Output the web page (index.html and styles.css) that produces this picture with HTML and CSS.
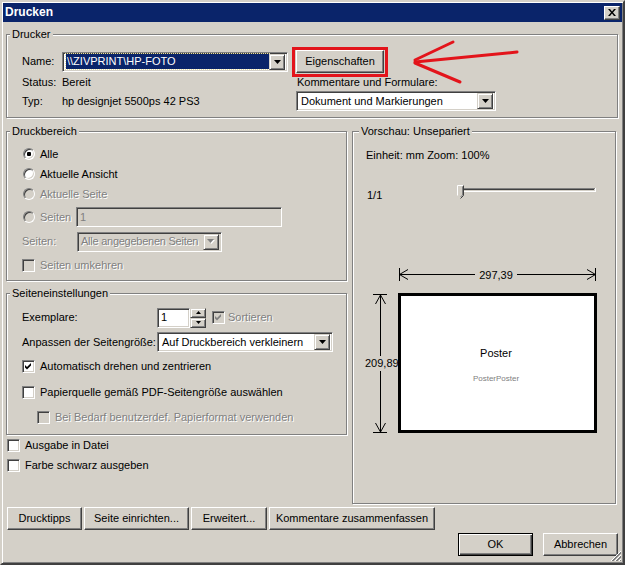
FILE: index.html
```html
<!DOCTYPE html>
<html lang="de">
<head>
<meta charset="utf-8">
<title>Drucken</title>
<link rel="stylesheet" href="styles.css">
</head>
<body>
<div class="dialog">
  <div class="titlebar">
    <span class="title">Drucken</span>
    <span class="close"><svg width="8" height="7" viewBox="0 0 8 7"><path d="M0 0h2l2 2.4L6 0h2L5 3.5 8 7H6L4 4.6 2 7H0l3-3.5z"/></svg></span>
  </div>
  <div class="content">
    <div class="group printer">
      <span class="group-title">Drucker</span>
      <div class="printer-grid">
        <span>Name:</span>
        <div class="field combo name-combo"><span class="sel-text">\\ZIVPRINT\HP-FOTO</span><span class="drop"><svg width="7" height="4" viewBox="0 0 7 4"><path d="M0 0h7L3.5 4z"/></svg></span></div>
        <div class="props-wrap"><button class="btn props">Eigenschaften</button></div>
        <span>Status:</span><span>Bereit</span><span class="kf-label">Kommentare und Formulare:</span>
        <span>Typ:</span><span>hp designjet 5500ps 42 PS3</span>
        <div class="field combo kf-combo"><span class="combo-text">Dokument und Markierungen</span><span class="drop"><svg width="7" height="4" viewBox="0 0 7 4"><path d="M0 0h7L3.5 4z"/></svg></span></div>
      </div>
    </div>

    <div class="main">
      <div class="left-col">
        <div class="group range">
          <span class="group-title">Druckbereich</span>
          <div class="row r1"><span class="radio checked"></span><span>Alle</span></div>
          <div class="row"><span class="radio"></span><span>Aktuelle Ansicht</span></div>
          <div class="row"><span class="radio disabled"></span><span class="dis">Aktuelle Seite</span></div>
          <div class="row r4"><span class="radio disabled"></span><span class="dis seiten-lbl">Seiten</span><div class="field disabled pages-input"><span class="dis-plain">1</span></div></div>
          <div class="row r5"><span class="dis pages-lbl">Seiten:</span><div class="field combo disabled pages-combo"><span class="combo-text dis tight">Alle angegebenen Seiten</span><span class="drop"><svg width="8" height="5" viewBox="0 0 8 5"><path d="M1 1h7L4.5 5z" fill="#fff"/><path d="M0 0h7L3.5 4z" fill="#808080"/></svg></span></div></div>
          <div class="row r6"><span class="check disabled"></span><span class="dis">Seiten umkehren</span></div>
        </div>

        <div class="group pagesetup">
          <span class="group-title">Seiteneinstellungen</span>
          <div class="row s1">
            <span class="ps-lbl">Exemplare:</span>
            <div class="field copies"><span>1</span></div>
            <div class="spin">
              <span class="spin-btn"><svg width="5" height="3" viewBox="0 0 5 3"><path d="M2.5 0L5 3H0z"/></svg></span>
              <span class="spin-btn"><svg width="5" height="3" viewBox="0 0 5 3"><path d="M0 0h5L2.5 3z"/></svg></span>
            </div>
            <span class="check disabled sort-check"><svg width="13" height="13" viewBox="0 0 13 13"><path d="M3 5l2 2 4-4v2.5l-4 4-2-2z" fill="#808080"/></svg></span>
            <span class="dis">Sortieren</span>
          </div>
          <div class="row s2">
            <span class="ps-lbl">Anpassen der Seitengröße:</span>
            <div class="field combo fit-combo"><span class="combo-text">Auf Druckbereich verkleinern</span><span class="drop"><svg width="7" height="4" viewBox="0 0 7 4"><path d="M0 0h7L3.5 4z"/></svg></span></div>
          </div>
          <div class="row s3"><span class="check"><svg width="13" height="13" viewBox="0 0 13 13"><path d="M3 5l2 2 4-4v2.5l-4 4-2-2z" fill="#000"/></svg></span><span>Automatisch drehen und zentrieren</span></div>
          <div class="row s4"><span class="check"></span><span>Papierquelle gemäß PDF-Seitengröße auswählen</span></div>
          <div class="row s5"><span class="check disabled"></span><span class="dis">Bei Bedarf benutzerdef. Papierformat verwenden</span></div>
        </div>

        <div class="row o1"><span class="check"></span><span>Ausgabe in Datei</span></div>
        <div class="row o2"><span class="check"></span><span>Farbe schwarz ausgeben</span></div>
      </div>

      <div class="group preview">
        <span class="group-title">Vorschau: Unsepariert</span>
        <div class="unit">Einheit: mm Zoom: 100%</div>
        <div class="slider-row">
          <span>1/1</span>
          <svg class="slider" width="139" height="14" viewBox="0 0 139 14">
            <line x1="5" y1="3.5" x2="138" y2="3.5" stroke="#808080"/>
            <line x1="5" y1="4.5" x2="137" y2="4.5" stroke="#404040"/>
            <line x1="5" y1="6.5" x2="138" y2="6.5" stroke="#fff"/>
            <line x1="138.5" y1="3" x2="138.5" y2="7" stroke="#fff"/>
            <path d="M0 0h7v10l-3.5 3.5L0 10z" fill="#d4d0c8"/>
            <path d="M0.5 10.5V0.5h6" fill="none" stroke="#fff"/>
            <path d="M6.5 0.5v10l-3 3" fill="none" stroke="#404040"/>
            <path d="M5.5 1.5v8.5l-2 2" fill="none" stroke="#808080"/>
          </svg>
        </div>
        <svg class="diagram" width="262" height="200" viewBox="0 0 262 200">
          <g stroke="#000" stroke-width="1" fill="none">
            <line x1="46.5" y1="6" x2="46.5" y2="19"/>
            <line x1="242.5" y1="6" x2="242.5" y2="19"/>
            <line x1="46" y1="12.5" x2="243" y2="12.5"/>
            <path d="M55 7.5l-8.5 5 8.5 5"/>
            <path d="M234 7.5l8.5 5-8.5 5"/>
            <line x1="20" y1="32.5" x2="34" y2="32.5"/>
            <line x1="20" y1="170.5" x2="34" y2="170.5"/>
            <line x1="27.5" y1="33" x2="27.5" y2="170"/>
            <path d="M22.5 42l5-9 5 9"/>
            <path d="M22.5 161l5 9 5-9"/>
          </g>
          <rect x="122" y="4" width="42" height="16" fill="#d4d0c8"/>
          <text x="143" y="16.5" text-anchor="middle" class="dtext">297,39</text>
          <rect x="11" y="94" width="34" height="15" fill="#d4d0c8"/>
          <text x="12" y="105" class="dtext">209,89</text>
          <rect x="46.5" y="32.5" width="196" height="137" fill="#fff" stroke="#000" stroke-width="3"/>
          <text x="143" y="95" text-anchor="middle" class="dtext">Poster</text>
          <text x="143" y="119" text-anchor="middle" class="dsmall">PosterPoster</text>
        </svg>
      </div>
    </div>

    <div class="btn-row">
      <button class="btn b1">Drucktipps</button>
      <button class="btn b2">Seite einrichten...</button>
      <button class="btn b3">Erweitert...</button>
      <button class="btn b4">Kommentare zusammenfassen</button>
    </div>
    <div class="ok-row">
      <button class="btn default">OK</button>
      <button class="btn">Abbrechen</button>
    </div>
  </div>

  <svg class="annot-arrow" width="120" height="52" viewBox="0 0 120 52">
    <g stroke="#e3141b" stroke-width="3" stroke-linecap="round" fill="none">
      <path d="M109 14L7 24"/>
      <path d="M7 22L45 4"/>
      <path d="M7 25L52 44"/>
    </g>
  </svg>
  <svg class="grip" width="12" height="12" viewBox="0 0 12 12">
    <g stroke-width="1">
      <line x1="11" y1="1" x2="1" y2="11" stroke="#fff"/>
      <line x1="11" y1="2" x2="2" y2="11" stroke="#808080"/>
      <line x1="11" y1="3" x2="3" y2="11" stroke="#808080"/>
      <line x1="11" y1="5" x2="5" y2="11" stroke="#fff"/>
      <line x1="11" y1="6" x2="6" y2="11" stroke="#808080"/>
      <line x1="11" y1="7" x2="7" y2="11" stroke="#808080"/>
      <line x1="11" y1="9" x2="9" y2="11" stroke="#fff"/>
      <line x1="11" y1="10" x2="10" y2="11" stroke="#808080"/>
    </g>
  </svg>
</div>
</body>
</html>
```

FILE: styles.css
```css
* { box-sizing: border-box; }
html, body { margin: 0; padding: 0; background: #d4d0c8; }
body {
  font-family: "Liberation Sans", Arial, sans-serif;
  font-size: 11px;
  line-height: 13px;
  color: #000;
}

.dialog {
  position: relative;
  width: 625px;
  height: 565px;
  background: #d4d0c8;
  border: 2px solid;
  border-color: #d4d0c8 #404040 #404040 #d4d0c8;
  box-shadow: inset 1px 1px 0 #fff, inset -1px -1px 0 #808080;
}

.titlebar {
  margin: 1px 1px 0 1px;
  height: 19px;
  background: #0a246a;
  display: flex;
  align-items: center;
  justify-content: space-between;
  padding: 0 2px 0 2px;
}
.title { color: #fff; font-weight: bold; font-size: 12px; }
.close {
  width: 16px; height: 14px;
  background: #d4d0c8;
  border: 1px solid;
  border-color: #fff #404040 #404040 #fff;
  box-shadow: inset -1px -1px 0 #808080;
  display: flex; align-items: center; justify-content: center;
  padding-right: 1px;
}

.content { padding: 0 5px 0 4px; }

/* group boxes */
.group {
  border: 1px solid #808080;
  box-shadow: inset 1px 1px 0 #fff, 1px 1px 0 #fff;
}
.group-title {
  display: block;
  width: fit-content;
  background: #d4d0c8;
  padding: 0 2px;
  margin-top: -7px;
  height: 13px;
  line-height: 13px;
}

.printer { margin-top: 12px; padding: 0 0 6px 15px; }
.printer .group-title { margin-left: -12px; }
.printer-grid {
  margin-top: 9px;
  display: grid;
  grid-template-columns: 40px 234px 1fr;
  grid-template-rows: 23px 18px 20px;
  align-items: center;
}
.kf-label { padding-left: 1px; }

/* fields */
.field {
  background: #fff;
  border: 1px solid;
  border-color: #808080 #fff #fff #808080;
  box-shadow: inset 1px 1px 0 #404040, inset -1px -1px 0 #d4d0c8;
  height: 20px;
  display: flex;
  align-items: center;
  padding: 2px;
}
.field.disabled { background: #d4d0c8; }
.combo { justify-content: space-between; }
.combo-text {
  padding-left: 2px;
  white-space: nowrap;
  overflow: hidden;
  flex: 1;
  min-width: 0;
}
.combo-text.tight { letter-spacing: -0.25px; padding-left: 1px; }
.drop {
  width: 16px; height: 16px;
  flex: none;
  background: #d4d0c8;
  border: 1px solid;
  border-color: #d4d0c8 #404040 #404040 #d4d0c8;
  box-shadow: inset 1px 1px 0 #fff, inset -1px -1px 0 #808080;
  display: flex; align-items: center; justify-content: center;
}
.drop svg { display: block; }

.name-combo { width: 226px; }
.sel-text {
  background: #0a246a;
  color: #fff;
  height: 15px;
  line-height: 15px;
  width: 206px;
  margin-left: 1px;
  padding-left: 1px;
  outline: 1px dotted #e8e0a0;
  outline-offset: 0;
}
.kf-combo { width: 200px; }

.props-wrap { position: relative; width: 88px; height: 23px; }
.props-wrap::after {
  content: "";
  position: absolute;
  left: -4px; top: -3px; right: -4px; bottom: -4px;
  border: 3px solid #e3141b;
}

/* buttons */
.btn {
  font: inherit;
  color: #000;
  background: #d4d0c8;
  border: 1px solid;
  border-color: #fff #404040 #404040 #fff;
  box-shadow: inset -1px -1px 0 #808080, inset 1px 1px 0 #d4d0c8;
  height: 23px;
  padding: 0;
  margin: 0;
  display: flex; align-items: center; justify-content: center;
}
.props { width: 88px; }
.btn.default {
  border: 1px solid #000;
  box-shadow: inset 1px 1px 0 #fff, inset -1px -1px 0 #404040, inset -2px -2px 0 #808080;
}

/* main layout */
.main {
  margin-top: 13px;
  display: grid;
  grid-template-columns: 341px 264px;
  column-gap: 5px;
  align-items: start;
}
.left-col { display: flex; flex-direction: column; }

.row { display: flex; align-items: center; height: 20px; }

.radio {
  width: 12px; height: 12px;
  border-radius: 50%;
  background: #fff;
  border: 1px solid;
  border-color: #808080 #fff #fff #808080;
  box-shadow: inset 1px 1px 0 #404040, inset -1px -1px 0 #d4d0c8;
  margin-right: 5px;
  margin-left: 1px;
  position: relative;
  flex: none;
}
.radio.checked::after {
  content: "";
  position: absolute;
  left: 3px; top: 3px;
  width: 4px; height: 4px;
  border-radius: 1px;
  background: #000;
}
.radio.disabled { background: #d4d0c8; }

.check {
  width: 13px; height: 13px;
  background: #fff;
  border: 1px solid;
  border-color: #808080 #fff #fff #808080;
  box-shadow: inset 1px 1px 0 #404040, inset -1px -1px 0 #d4d0c8;
  margin-right: 5px;
  flex: none;
  position: relative;
}
.check svg { position: absolute; left: -1px; top: -1px; }
.check.disabled { background: #d4d0c8; }

.dis { color: #808080; text-shadow: 1px 1px 0 #fff; }
.dis-plain { color: #808080; padding-left: 1px; }

.range { padding: 0 0 5px 15px; }
.range .group-title { margin-left: -12px; }
.range .r1 { margin-top: 6px; }
.range .r4 { margin-top: 2px; height: 22px; }
.range .r5 { margin-top: 3px; height: 21px; }
.range .r6 { margin-top: 3px; }
.seiten-lbl { width: 36px; }
.pages-input { width: 206px; }
.pages-lbl { width: 55px; }
.pages-combo { width: 145px; }

.pagesetup { margin-top: 12px; padding: 0 0 7px 15px; }
.pagesetup .group-title { margin-left: -12px; }
.ps-lbl { width: 135px; white-space: nowrap; }
.pagesetup .s1 { margin-top: 7px; height: 21px; }
.pagesetup .s2 { margin-top: 4px; }
.pagesetup .s3 { margin-top: 4px; }
.pagesetup .s4 { margin-top: 6px; }
.pagesetup .s5 { margin-top: 5px; padding-left: 15px; }
.copies { width: 33px; padding-left: 3px; }
.spin { display: flex; flex-direction: column; width: 16px; height: 20px; margin-left: 0; }
.spin-btn {
  height: 10px;
  background: #d4d0c8;
  border: 1px solid;
  border-color: #d4d0c8 #404040 #404040 #d4d0c8;
  box-shadow: inset 1px 1px 0 #fff, inset -1px -1px 0 #808080;
  display: flex; align-items: center; justify-content: center;
}
.spin-btn svg { display: block; }
.sort-check { margin-left: 6px; margin-right: 3px; }
.fit-combo { width: 176px; }

.o1 { margin-top: 1px; height: 19px; padding-left: 1px; }
.o2 { padding-left: 1px; }

.preview { height: 373px; padding: 0; }
.preview .group-title { margin-left: 6px; }
.unit { margin-top: 10px; margin-left: 13px; height: 14px; line-height: 14px; }
.slider-row {
  margin-top: 23px;
  margin-left: 14px;
  height: 20px;
  display: grid;
  grid-template-columns: 90px 139px;
  align-items: center;
}
.slider { display: block; align-self: start; }
.diagram { display: block; margin-top: 57px; }
.dtext { font-family: "Liberation Sans", Arial, sans-serif; font-size: 11px; fill: #000; }
.dsmall { font-family: "Liberation Sans", Arial, sans-serif; font-size: 8px; fill: #808080; }

.btn-row {
  margin-top: 3px;
  margin-left: 1px;
  display: flex;
  gap: 2px;
}
.b1 { width: 75px; }
.b2 { width: 105px; }
.b3 { width: 76px; }
.b4 { width: 166px; }

.ok-row {
  margin-top: 3px;
  display: flex;
  justify-content: flex-end;
  gap: 10px;
}
.ok-row .btn { width: 75px; }

.annot-arrow { position: absolute; left: 406px; top: 36px; }
.grip { position: absolute; right: 1px; bottom: 1px; }
```
